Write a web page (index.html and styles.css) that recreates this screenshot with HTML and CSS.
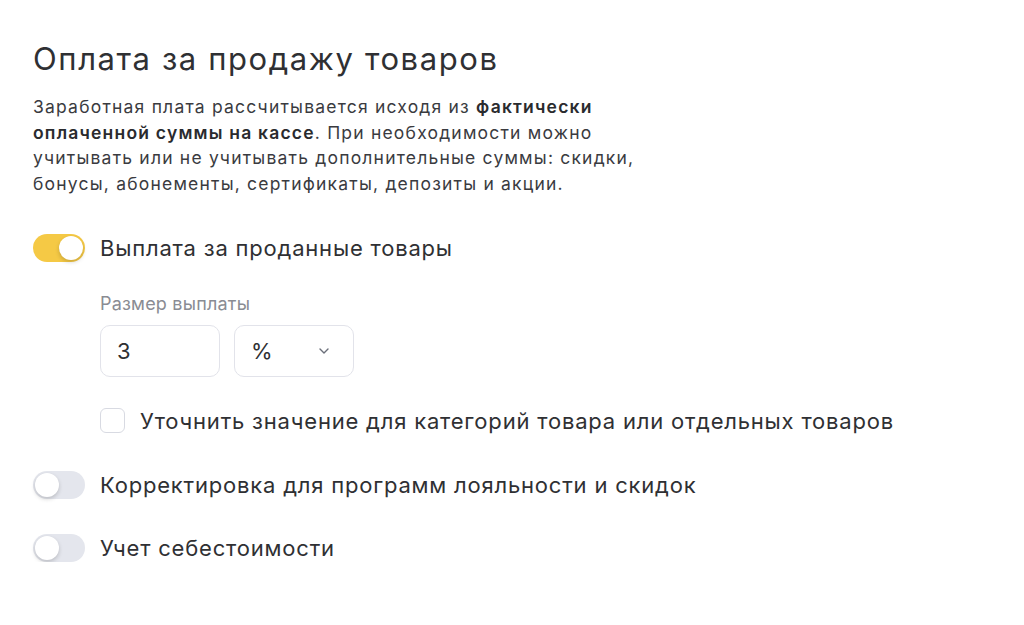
FILE: index.html
```html
<!DOCTYPE html>
<html lang="ru">
<head>
<meta charset="utf-8">
<link rel="stylesheet" href="styles.css">
</head>
<body>
<main class="page">
  <h1 class="title">Оплата за продажу товаров</h1>
  <p class="desc">Заработная плата рассчитывается исходя из <b>фактически оплаченной суммы на кассе</b>. При необходимости можно учитывать или не учитывать дополнительные суммы: скидки, бонусы, абонементы, сертификаты, депозиты и акции.</p>

  <div class="row">
    <span class="toggle on"><span class="knob"></span></span>
    <span class="label">Выплата за проданные товары</span>
  </div>

  <div class="sub">
    <div class="field-label">Размер выплаты</div>
    <div class="inputs">
      <div class="input">3</div>
      <div class="input select">
        <span>%</span>
        <svg class="chev" width="10" height="6" viewBox="0 0 10 6"><path d="M1 1l4 4 4-4" fill="none" stroke="#6b6f7a" stroke-width="1.4" stroke-linecap="round" stroke-linejoin="round"/></svg>
      </div>
    </div>
    <div class="check-row">
      <span class="checkbox"></span>
      <span class="label">Уточнить значение для категорий товара или отдельных товаров</span>
    </div>
  </div>

  <div class="row row-gap">
    <span class="toggle"><span class="knob"></span></span>
    <span class="label">Корректировка для программ лояльности и скидок</span>
  </div>
  <div class="row row-gap2">
    <span class="toggle"><span class="knob"></span></span>
    <span class="label">Учет себестоимости</span>
  </div>
</main>
</body>
</html>
```
FILE: styles.css
```css
* { box-sizing: border-box; }
html, body { margin: 0; background: #fff; }
body {
  font-family: Inter, "Noto Sans", sans-serif;
  color: #2f3033;
}
.page {
  padding: 40px 32px 0 33px;
}
.title {
  margin: 0;
  font-size: 31px;
  font-weight: 400;
  line-height: 38px;
  letter-spacing: 1.6px;
}
.desc {
  margin: 16px 0 0;
  width: 640px;
  font-size: 17.5px;
  line-height: 25.7px;
  letter-spacing: 1.2px;
  color: #3a3b3f;
}
.desc b { font-weight: 600; color: #2a2b2e; }
.row {
  display: flex;
  align-items: center;
  gap: 15px;
  margin-top: 37px;
  height: 28px;
}
.label {
  font-size: 22px;
  line-height: 28px;
  letter-spacing: 0.8px;
}
.toggle {
  position: relative;
  width: 52px;
  height: 28px;
  border-radius: 14px;
  background: #e4e6ed;
  flex: none;
}
.toggle.on { background: #f5c945; }
.knob {
  position: absolute;
  top: 2px;
  left: 2px;
  width: 24px;
  height: 24px;
  border-radius: 50%;
  background: #fff;
  box-shadow: 0 2px 4px rgba(0,0,0,0.18);
}
.toggle.on .knob { left: 26px; }
.sub {
  padding-left: 67px;
  margin-top: 31px;
}
.field-label {
  font-size: 18px;
  line-height: 22px;
  letter-spacing: 0.2px;
  color: #8a8c93;
}
.inputs {
  display: flex;
  gap: 14px;
  margin-top: 10px;
}
.input {
  width: 120px;
  height: 52px;
  border: 1.5px solid #e2e3ea;
  border-radius: 10px;
  display: flex;
  align-items: center;
  padding: 0 16px;
  font-size: 22px;
}
.select { justify-content: space-between; padding-right: 24px; }
.check-row {
  display: flex;
  align-items: center;
  gap: 15px;
  margin-top: 30px;
  height: 28px;
}
.checkbox {
  width: 25px;
  height: 25px;
  border: 1.5px solid #d8dae2;
  border-radius: 6px;
  flex: none;
}
.row-gap { margin-top: 36px; }
.row-gap2 { margin-top: 35px; }
```
